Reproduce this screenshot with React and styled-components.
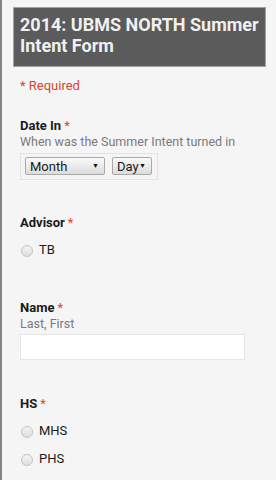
import React from 'react';
import styled, { createGlobalStyle } from 'styled-components';

const GlobalStyle = createGlobalStyle`
  html, body {
    margin: 0;
    padding: 0;
    background: #f5f5f5;
  }
  body {
    font-family: Roboto, "Liberation Sans", Arial, sans-serif;
  }
`;

const Page = styled.div`
  min-height: 480px;
  box-sizing: border-box;
  border-left: 2px solid #858585;
  background: #f5f5f5;
  padding: 7px 10px 0 11px;
`;

const Header = styled.div`
  background: #5b5b5b;
  border: 1px solid #a3a3a3;
  padding: 6px 6px 10px 6px;
`;

const Title = styled.h1`
  margin: 0;
  font-size: 18px;
  line-height: 21px;
  font-weight: 700;
  color: #f0f0f0;
`;

const Body = styled.div`
  padding: 0 7px;
`;

const Required = styled.div`
  margin-top: 11px;
  font-size: 13px;
  line-height: 16px;
  color: #d5472f;
`;

const Question = styled.div`
  margin-top: ${p => p.$gap}px;
`;

const Label = styled.div`
  font-size: 13px;
  line-height: 16px;
  font-weight: 700;
  color: #1a1a1a;
`;

const Star = styled.span`
  color: #d5472f;
  font-weight: 400;
  margin-left: 3px;
`;

const Help = styled.div`
  font-size: 12.5px;
  line-height: 16px;
  color: #7a7a7a;
`;

const DateBox = styled.div`
  display: inline-flex;
  gap: 7px;
  margin-top: 3px;
  padding: 3px 5px 4px 4px;
  border: 1px solid #e3e3e3;
`;

const Select = styled.div`
  box-sizing: border-box;
  width: ${p => p.$width}px;
  height: 18px;
  display: flex;
  align-items: center;
  justify-content: space-between;
  padding: 0 5px 0 4px;
  border: 1px solid #a8a8a8;
  border-radius: 2px;
  background: linear-gradient(#fafafa, #dcdcdc);
  font-size: 13px;
  color: #1a1a1a;
`;

const Arrow = styled.span`
  font-size: 7px;
  color: #111;
`;

const Options = styled.div`
  margin-top: 11px;
  display: flex;
  flex-direction: column;
  gap: 12px;
`;

const Option = styled.label`
  display: flex;
  align-items: center;
  font-size: 13px;
  line-height: 16px;
  color: #1a1a1a;
`;

const Radio = styled.span`
  box-sizing: border-box;
  width: 12px;
  height: 12px;
  margin: 2px 6px 0 1px;
  border-radius: 50%;
  border: 1px solid #c4c4c4;
  background: linear-gradient(#f4f4f4, #dedede);
`;

const TextInput = styled.div`
  box-sizing: border-box;
  width: 225px;
  height: 26px;
  margin-top: 2px;
  background: #fff;
  border: 1px solid #e6e6e6;
`;

const RadioQuestion = ({ gap, label, options }) => (
  <Question $gap={gap}>
    <Label>{label}<Star>*</Star></Label>
    <Options>
      {options.map(o => (
        <Option key={o}>
          <Radio />
          {o}
        </Option>
      ))}
    </Options>
  </Question>
);

const App = () => (
  <>
    <GlobalStyle />
    <Page>
      <Header>
        <Title>2014: UBMS NORTH Summer Intent Form</Title>
      </Header>
      <Body>
        <Required>* Required</Required>

        <Question $gap={24}>
          <Label>Date In<Star>*</Star></Label>
          <Help>When was the Summer Intent turned in</Help>
          <DateBox>
            <Select $width={80}>Month<Arrow>▼</Arrow></Select>
            <Select $width={40}>Day<Arrow>▼</Arrow></Select>
          </DateBox>
        </Question>

        <RadioQuestion gap={35} label="Advisor" options={['TB']} />

        <Question $gap={42}>
          <Label>Name<Star>*</Star></Label>
          <Help>Last, First</Help>
          <TextInput />
        </Question>

        <RadioQuestion gap={36} label="HS" options={['MHS', 'PHS']} />
      </Body>
    </Page>
  </>
);

export default App;
